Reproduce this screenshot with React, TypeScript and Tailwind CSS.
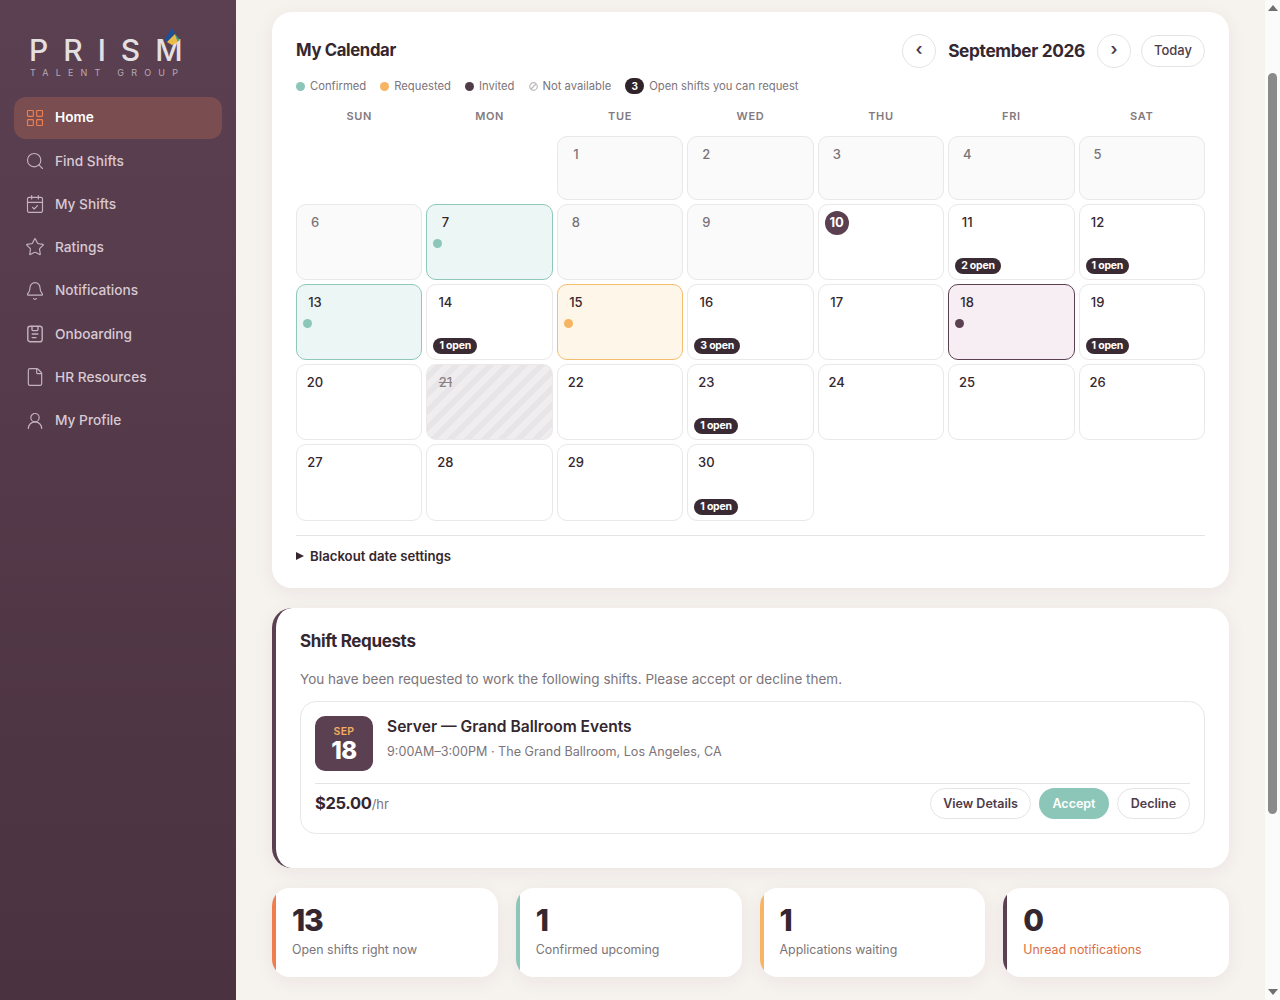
import { Bell, CalendarCheck, File, LayoutGrid, Search, Star, UserRound } from "lucide-react";

const heading = "font-['Inter',sans-serif] font-bold tracking-[-0.02em] text-[#35272f]";

function ClipboardIcon() {
  return (
    <svg width="20" height="20" viewBox="0 0 20 20" fill="none" stroke="currentColor" strokeWidth="1.4" strokeLinecap="round" strokeLinejoin="round">
      <rect x="2.8" y="2.2" width="14.4" height="15.6" rx="2.4" />
      <path d="M7 2.4v3.2c0 .6.4 1 1 1h4c.6 0 1-.4 1-1V2.4" />
      <path d="M7.2 10h5.6M7.2 13.6h3.8" />
    </svg>
  );
}

const navItems = [
  { label: "Home", icon: <LayoutGrid size={20} strokeWidth={1.4} />, active: true },
  { label: "Find Shifts", icon: <Search size={20} strokeWidth={1.4} /> },
  { label: "My Shifts", icon: <CalendarCheck size={20} strokeWidth={1.4} /> },
  { label: "Ratings", icon: <Star size={20} strokeWidth={1.4} /> },
  { label: "Notifications", icon: <Bell size={20} strokeWidth={1.4} /> },
  { label: "Onboarding", icon: <ClipboardIcon /> },
  { label: "HR Resources", icon: <File size={20} strokeWidth={1.4} /> },
  { label: "My Profile", icon: <UserRound size={20} strokeWidth={1.4} /> },
];

function Sidebar() {
  return (
    <aside className="flex w-[236px] shrink-0 flex-col bg-gradient-to-b from-[#5b4051] to-[#4b3240] px-[14px]">
      <div className="relative mb-[19px] ml-4 mt-[36px] h-[42px] w-[152px]">
        <div className="ml-[-1px] whitespace-nowrap font-['Inter',sans-serif] text-[30px] font-medium leading-[29px] tracking-[0.5em] text-[#e4e0e2]">PRISM</div>
        <div className="mt-[2px] whitespace-nowrap font-['Inter',sans-serif] text-[9px] leading-[11px] tracking-[0.8em] text-[#b9aab3]">TALENT GROUP</div>
        <svg className="absolute left-[133px] top-[-8px]" width="18" height="20" viewBox="0 0 18 20">
          <path d="M9 0l3 6-8 8-3-2z" fill="#1f4f96" />
          <path d="M4 14l8-8 3 8-6 3z" fill="#e9bd45" />
          <path d="M12 6l5 6-2.5 1.500z" fill="#3f9f8b" />
        </svg>
      </div>
      <nav className="flex flex-col gap-[1.3px]">
        {navItems.map((item) => (
          <div
            key={item.label}
            className={
              item.active
                ? "flex h-[42px] items-center gap-[10px] rounded-[12px] bg-[#7a4d51] px-[11px] pb-[1px] text-[13.7px] font-semibold text-white"
                : "flex h-[42px] items-center gap-[10px] rounded-[12px] px-[11px] pb-[1px] text-[13.7px] font-medium text-[#d8c9d3]"
            }
          >
            <span className={item.active ? "text-[#ee7f50]" : "text-[#c4b3be]"}>{item.icon}</span>
            {item.label}
          </div>
        ))}
      </nav>
    </aside>
  );
}

function LegendDot({ color, label }: { color: string; label: string }) {
  return (
    <span className="flex items-center gap-[5px]">
      <span className={`h-[9px] w-[9px] rounded-full ${color}`} />
      {label}
    </span>
  );
}

type Day = {
  n?: number;
  kind?: "past" | "confirmed" | "requested" | "invited" | "blocked" | "today";
  open?: number;
};

const days: Day[] = [
  {},
  {},
  { n: 1, kind: "past" },
  { n: 2, kind: "past" },
  { n: 3, kind: "past" },
  { n: 4, kind: "past" },
  { n: 5, kind: "past" },
  { n: 6, kind: "past" },
  { n: 7, kind: "confirmed" },
  { n: 8, kind: "past" },
  { n: 9, kind: "past" },
  { n: 10, kind: "today" },
  { n: 11, open: 2 },
  { n: 12, open: 1 },
  { n: 13, kind: "confirmed" },
  { n: 14, open: 1 },
  { n: 15, kind: "requested" },
  { n: 16, open: 3 },
  { n: 17 },
  { n: 18, kind: "invited" },
  { n: 19, open: 1 },
  { n: 20 },
  { n: 21, kind: "blocked" },
  { n: 22 },
  { n: 23, open: 1 },
  { n: 24 },
  { n: 25 },
  { n: 26 },
  { n: 27 },
  { n: 28 },
  { n: 29 },
  { n: 30, open: 1 },
];

const cellStyles: Record<string, string> = {
  plain: "border-[#e9e7e8] bg-white",
  past: "border-[#e9e7e8] bg-[#fafafa]",
  today: "border-[#e9e7e8] bg-white",
  confirmed: "border-[#8fc7ba] bg-[#ecf7f5]",
  requested: "border-[#f5bd6e] bg-[#fef6e9]",
  invited: "border-[#5a4050] bg-[#f6eef3]",
  blocked:
    "border-[#ebe8ea] bg-[repeating-linear-gradient(135deg,#f0edef_0px,#f0edef_6px,#e8e5e8_6px,#e8e5e8_12px)]",
};

const dotStyles: Record<string, string> = {
  confirmed: "bg-[#8cc6b9]",
  requested: "bg-[#f7b463]",
  invited: "bg-[#5a4050]",
};

function DayCell({ day }: { day: Day }) {
  if (!day.n) return <div />;
  const kind = day.kind ?? "plain";
  return (
    <div className={`relative rounded-[10px] border px-[6px] pt-[6px] ${cellStyles[kind]}`}>
      <div
        className={
          kind === "today"
            ? "flex h-6 w-6 items-center justify-center rounded-full bg-[#5a4050] text-[13px] font-bold text-white"
            : kind === "past"
              ? "flex h-6 w-6 items-center justify-center text-[13px] font-medium text-[#7c7479]"
              : kind === "blocked"
                ? "flex h-6 w-6 items-center justify-center text-[13px] font-medium text-[#8b8388] line-through"
                : "flex h-6 w-6 items-center justify-center text-[13px] font-medium text-[#35272f]"
        }
      >
        {day.n}
      </div>
      {dotStyles[kind] && <div className={`mt-[4px] h-[9px] w-[9px] rounded-full ${dotStyles[kind]}`} />}
      {day.open && (
        <div className="absolute bottom-[5px] left-[6px] rounded-full bg-[#3a2a33] px-[6px] text-[10.5px] font-bold leading-[16px] tracking-[-0.02em] text-white">
          {day.open} open
        </div>
      )}
    </div>
  );
}

function Calendar() {
  return (
    <section className="rounded-[20px] bg-white px-6 pb-[23px] pt-[22px] shadow-[0_4px_20px_rgba(60,40,50,0.06)]">
      <div className="flex h-[34px] items-center justify-between">
        <h2 className={`text-[16.7px] ${heading}`}>My Calendar</h2>
        <div className="flex items-center">
          <button className="flex h-[34px] w-[34px] items-center justify-center rounded-full border border-[#e6e3e4] pb-[2px] text-[17px] font-semibold text-[#4a3a44]">‹</button>
          <div className={`mx-3 text-[17.3px] ${heading}`}>September 2026</div>
          <button className="flex h-[34px] w-[34px] items-center justify-center rounded-full border border-[#e6e3e4] pb-[2px] text-[17px] font-semibold text-[#4a3a44]">›</button>
          <button className="ml-[10px] h-8 w-[64px] rounded-full border border-[#e6e3e4] text-[13px] font-medium text-[#4f3c49]">Today</button>
        </div>
      </div>
      <div className="mt-[8px] flex h-[20px] items-center gap-[14px] text-[11.25px] text-[#7c7479]">
        <LegendDot color="bg-[#8cc6b9]" label="Confirmed" />
        <LegendDot color="bg-[#f7b463]" label="Requested" />
        <LegendDot color="bg-[#4f3c49]" label="Invited" />
        <span className="flex items-center gap-[5px]">
          <svg width="9" height="9" viewBox="0 0 9 9" fill="none" stroke="#bdb8bb" strokeWidth="1.2">
            <circle cx="4.5" cy="4.5" r="3.8" />
            <path d="M2 7 7 2" />
          </svg>
          Not available
        </span>
        <span className="flex items-center gap-[5px]">
          <span className="flex h-4 w-[19px] items-center justify-center rounded-full bg-[#2f2229] text-[10px] font-bold text-white">3</span>
          Open shifts you can request
        </span>
      </div>
      <div className="mt-[12px] grid h-[16px] grid-cols-7 gap-1 text-center text-[11px] font-semibold leading-[16px] tracking-[0.06em] text-[#837a80]">
        {["SUN", "MON", "TUE", "WED", "THU", "FRI", "SAT"].map((d) => (
          <div key={d}>{d}</div>
        ))}
      </div>
      <div className="mt-[12px] grid grid-cols-7 grid-rows-[64px_76px_76px_76px_77px] gap-1">
        {days.map((day, i) => (
          <DayCell key={i} day={day} />
        ))}
      </div>
      <div className="mt-[14px] flex items-center gap-[6px] border-t border-[#e6e3e4] pt-[11px] text-[13.2px] font-semibold leading-[18px] text-[#35272f]">
        <span className="h-0 w-0 border-y-[4px] border-l-[8px] border-y-transparent border-l-[#35272f]" />
        Blackout date settings
      </div>
    </section>
  );
}

function ShiftRequests() {
  return (
    <section className="h-[260px] rounded-[20px] border-l-4 border-[#5a4050] bg-white px-6 pt-[22px] shadow-[0_4px_20px_rgba(60,40,50,0.06)]">
      <h2 className={`text-[17px] leading-[22px] ${heading}`}>Shift Requests</h2>
      <p className="mt-[17px] text-[13.5px] leading-[20px] text-[#7c7479]">
        You have been requested to work the following shifts. Please accept or decline them.
      </p>
      <div className="mt-3 rounded-[16px] border border-[#e9e7e8] px-[14px] pb-[14px] pt-[14px]">
        <div className="flex gap-[14px] pb-3">
          <div className="flex h-[55px] w-[58px] flex-col items-center justify-center rounded-[10px] bg-[#5a4050] pt-[2px]">
            <span className="text-[10.5px] font-semibold leading-[12px] tracking-[0.03em] text-[#f4ad60]">SEP</span>
            <span className="text-[24px] font-extrabold leading-[26px] tracking-[-0.02em] text-white">18</span>
          </div>
          <div>
            <div className="text-[15.6px] font-semibold leading-[22px] text-[#35272f]">Server — Grand Ballroom Events</div>
            <div className="mt-[5px] text-[12.6px] leading-[18px] text-[#7c7479]">9:00AM–3:00PM · The Grand Ballroom, Los Angeles, CA</div>
          </div>
        </div>
        <div className="flex items-center justify-between border-t border-[#e6e3e4] pt-1">
          <div className={`text-[16.5px] ${heading}`}>
            $25.00<span className="text-[13px] font-normal tracking-normal text-[#7c7479]">/hr</span>
          </div>
          <div className="flex gap-2 text-[12.5px] font-semibold">
            <button className="h-[31px] w-[101px] rounded-full border border-[#e6e3e4] pt-[2px] text-[#4f3c49]">View Details</button>
            <button className="h-[31px] w-[70px] rounded-full bg-[#8cc6b9] pt-[2px] text-white">Accept</button>
            <button className="h-[31px] w-[73px] rounded-full border border-[#e6e3e4] pt-[2px] text-[#4f3c49]">Decline</button>
          </div>
        </div>
      </div>
    </section>
  );
}

const stats = [
  { value: "13", label: "Open shifts right now", bg: "bg-[linear-gradient(90deg,#ef7d4d_4px,#ffffff_4px)]", text: "text-[#7c7479]" },
  { value: "1", label: "Confirmed upcoming", bg: "bg-[linear-gradient(90deg,#8cc6b9_4px,#ffffff_4px)]", text: "text-[#7c7479]" },
  { value: "1", label: "Applications waiting", bg: "bg-[linear-gradient(90deg,#f7b463_4px,#ffffff_4px)]", text: "text-[#7c7479]" },
  { value: "0", label: "Unread notifications", bg: "bg-[linear-gradient(90deg,#5a4050_4px,#ffffff_4px)]", text: "text-[#dd6d42]" },
];

function Scrollbar() {
  return (
    <div className="flex w-[15px] shrink-0 flex-col items-center justify-between bg-[#fbfbfb] py-[5px]">
      <span className="h-0 w-0 border-x-[5px] border-b-[6px] border-x-transparent border-b-[#6f6f6f]" />
      <div className="mb-[175px] mt-[62px] w-[9px] flex-1 rounded-full bg-[#8a8a8a]" />
      <span className="h-0 w-0 border-x-[5px] border-t-[6px] border-x-transparent border-t-[#6f6f6f]" />
    </div>
  );
}

export default function App() {
  return (
    <div className="flex h-screen w-full overflow-hidden bg-[#f6f2ee] font-['Inter',sans-serif]">
      <Sidebar />
      <main className="flex min-w-0 flex-1 flex-col gap-5 overflow-hidden px-9 pt-3">
        <Calendar />
        <ShiftRequests />
        <div className="grid grid-cols-4 gap-[18px]">
          {stats.map((s) => (
            <div key={s.label} className={`h-[89px] rounded-[18px] pl-5 pt-[14px] shadow-[0_4px_20px_rgba(60,40,50,0.06)] ${s.bg}`}>
              <div className="text-[30px] font-extrabold leading-[36px] tracking-[-0.04em] text-[#35272f]">{s.value}</div>
              <div className={`mt-[2px] text-[12.4px] leading-[20px] ${s.text}`}>{s.label}</div>
            </div>
          ))}
        </div>
      </main>
      <Scrollbar />
    </div>
  );
}
